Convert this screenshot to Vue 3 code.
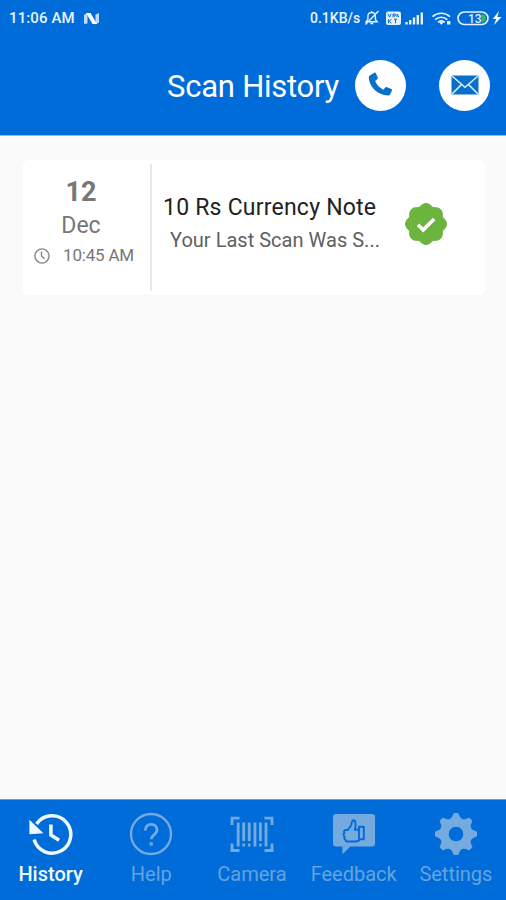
<script setup>
import { ref } from 'vue'

const active = ref('History')
const tabs = ['History', 'Help', 'Camera', 'Feedback', 'Settings']

const point = (r, deg) => {
  const a = (deg * Math.PI) / 180
  return `${(22 + r * Math.sin(a)).toFixed(2)} ${(22 - r * Math.cos(a)).toFixed(2)}`
}

// Eight soft lobes around the check mark
const badgePath = 'M' + Array.from({ length: 120 }, (_, i) => {
  const deg = i * 3
  return point(18 + 2.5 * Math.abs(Math.cos((4 * deg * Math.PI) / 180)) ** 1.35, deg)
}).join('L') + 'Z'

// Eight tapered teeth
const gearPath = 'M' + Array.from({ length: 8 }, (_, i) => {
  const d = i * 45
  return [point(15.6, d - 17), point(17, d - 11), point(20.3, d - 5), point(20.3, d + 5), point(17, d + 11), point(15.6, d + 17)].join('L')
}).join('L') + 'Z'
</script>

<template>
  <div class="screen">
    <header class="top">
      <div class="status">
        <span class="clock">11:06 AM</span>
        <svg class="nlogo" width="17" height="13" viewBox="0 0 17 13">
          <path d="M1 3 4.5 1v10.5L1 12zM12.5 2.5 16 1v9.5l-3.5 2z" fill="#b9dcfb" />
          <path d="M3 1h4.5l6.5 11H9.5z" fill="#fff" />
        </svg>
        <span class="rate">0.1KB/s</span>
        <svg class="sys" width="136" height="20" viewBox="0 0 136 20" fill="none" stroke="#e3f1ff" stroke-width="1.4">
          <path d="M5 13.8h11.2l-1.8-2.4V8.5c0-2.4-1.5-4-3.7-4s-3.8 1.6-3.8 4v2.8zM9.3 15.5h3M10.7 4.5V3M4.5 16.5 17.5 3" />
          <rect x="25" y="3.5" width="15" height="13.5" rx="2" fill="#e3f1ff" stroke="none" />
          <path d="m27 5.8 1.6 3.4 1.6-3.4M32 9.3V6h2.2v2H32M36 6v3M36.2 6l1.5 3M27.5 11.3v4M30.5 11.3l-2.5 2 2.5 2M33 11.3h3M34.5 11.3v4" stroke="#0870d5" stroke-width="1" />
          <path d="M45.5 14v2.5M49.2 12v4.5M53 9.5v7M56.8 7v9.5M60.8 4.5v12" stroke-width="2.4" />
          <path d="M71.5 8.6c5-4.5 12.5-4.5 17.5 0M74.2 11.6c3.6-3.1 8.5-3.1 12.1 0M77 14.3c2-1.8 4.7-1.8 6.7 0" stroke-width="1.7" />
          <path d="m78.2 14.4 2.1 2.3 2.2-2.3q-2.2-1.5-4.3 0zM86 13h3.4v3.6H86z" fill="#e3f1ff" stroke="none" />
          <rect x="97" y="4" width="30" height="12.5" rx="6.2" stroke-width="1.6" />
          <path d="M120.5 6h1.2q3 1 3 4.2t-3 4.2h-1.2z" fill="#35b85d" stroke="none" />
          <text x="107" y="14.6" class="charge">13</text>
          <path d="m138 3-6.2 8.1h3.4L133 17l7.5-8h-4.1z" fill="#fff" stroke="none" />
        </svg>
      </div>
      <div class="bar">
        <h1>Scan History</h1>
        <button class="round" aria-label="Call">
          <svg width="26" height="26" viewBox="0 0 26 26" fill="#0870c9">
            <path d="M2.2 3.2 6.3.8c.7-.4 1.3-.1 1.6.5l1.8 4.2c.3.7.1 1.3-.5 1.8L7.1 9c1.7 4 4.5 6.8 8.3 8.7l1.8-2.1c.5-.6 1.1-.7 1.8-.4l4.3 1.9c.7.3.9.9.6 1.6l-1.9 3.8c-.4.8-1.1 1.1-1.9 1.1C9.3 23 1 14.7.8 5.3c0-.9.5-1.6 1.4-2.1z" />
          </svg>
        </button>
        <button class="round" aria-label="Mail">
          <svg width="28" height="20" viewBox="0 0 28 20">
            <path d="M.5.5h27v19H.5z" fill="#0870c9" />
            <path d="m1 1 13 11.2L27 1M1 19l9.7-9.6M27 19l-9.7-9.6" fill="none" stroke="#d9ecfc" stroke-width="1.5" />
          </svg>
        </button>
      </div>
    </header>

    <main>
      <article class="card">
        <div class="when">
          <strong>12</strong>
          <span class="month">Dec</span>
          <span class="time">
            <svg width="16" height="16" viewBox="0 0 16 16" fill="none" stroke="#858585" stroke-width="1.4">
              <circle cx="8" cy="8" r="7.1" /><path d="M7.5 3.5v4.7l3.2 2.4" />
            </svg>
            <span>10:45 AM</span>
          </span>
        </div>
        <div class="what">
          <h2>10 Rs Currency Note</h2>
          <p>Your Last Scan Was S...</p>
        </div>
        <svg class="badge" width="44" height="44" viewBox="0 0 44 44">
          <path :d="badgePath" fill="#6db43e" stroke="#6db43e" stroke-linejoin="round" />
          <path d="m14 22.7 5.2 5.2L30.2 17" fill="none" stroke="#fff" stroke-width="3.6" />
        </svg>
      </article>
    </main>

    <nav>
      <button v-for="tab in tabs" :key="tab" class="tab" :class="[tab.toLowerCase(), { active: tab === active }]" @click="active = tab">
        <svg class="icon" width="44" height="44" viewBox="0 0 44 44" fill="none" stroke="currentColor">
          <template v-if="tab === 'History'">
            <path d="M5.1 27.6A18.7 18.7 0 1 0 7.6 12" stroke-width="3.5" />
            <path d="M.4 7.8v14.4l14-.9z" fill="currentColor" stroke="none" />
            <path d="M21.9 12.5v10.6l8.2 5.2" stroke-width="3.6" />
          </template>
          <template v-else-if="tab === 'Help'">
            <circle cx="22" cy="22" r="20" stroke-width="2.3" />
            <path d="M16.3 18.4c0-3.8 2.3-6 5.8-6s5.9 2.1 5.9 5.4c0 5.3-5.8 4.7-5.8 9.4" stroke-width="2.8" />
            <path d="M20.6 30.3h3.2v3.2h-3.2z" fill="currentColor" stroke="none" />
          </template>
          <template v-else-if="tab === 'Camera'">
            <path d="M2 13V6.2h7.5M34.5 6.2H42V13M2 31.5v7h7.5M34.5 38.5H42v-7" stroke-width="2.8" />
            <path d="M8.2 10.5v24M36 10.5v24M19.2 10.5V29M25 10.5v24" stroke-width="2.8" />
            <path d="M13.7 10.5V29M30.4 10.5V29" stroke-width="2.8" />
            <path d="M13.7 31.5v3M19.2 31.5v3M30.4 31.5v3" stroke-width="2.5" />
          </template>
          <template v-else-if="tab === 'Feedback'">
            <path d="M4 2h36q3 0 3 3v26.5q0 3-3 3H18.3L10.5 42.2v-7.7H4q-3 0-3-3V5q0-3 3-3z" fill="currentColor" stroke="none" />
            <path class="cut" d="M27 17.8h-4.2c.9-3.2 1.5-9.5-1.3-9.5-2 0-1.6 3.5-2.5 5.3-.9 1.9-2.5 3-3.2 4.4H14c-1.9 0-2.5 1.6-1.5 2.8-1.5 1.2-1.2 3.2.3 3.8-1 1.3-.4 2.9.8 3.3-.2 1.2.9 1.6 2 1.6H24l3-1zM27 14.8h4.8v12.5H27z" stroke-width="1.9" stroke-linejoin="round" />
          </template>
          <template v-else>
            <path :d="gearPath" fill="currentColor" stroke-width="1.6" stroke-linejoin="round" />
            <circle class="hole" cx="22" cy="22" r="7.3" stroke="none" />
          </template>
        </svg>
        <span>{{ tab }}</span>
      </button>
    </nav>
  </div>
</template>

<style>
body { margin: 0; }
</style>

<style scoped>
.screen { width: 506px; height: 900px; display: flex; flex-direction: column; background: #fafafa; font-family: Roboto, sans-serif; overflow: hidden; }
button { border: 0; padding: 0; font: inherit; }
svg { display: block; flex: none; }
h1, h2, p { margin: 0; font-weight: 400; white-space: nowrap; }
.top { height: 136px; box-sizing: border-box; flex: none; background: #006cd9; border-bottom: 1px solid #8dbbe9; color: #fff; }
.status { height: 36px; display: flex; align-items: center; padding: 0 9px 0 9px; box-sizing: border-box; color: #e7f4ff; font-weight: 500; }
.clock { font-size: 15px; width: 67px; letter-spacing: .1px; white-space: nowrap; }
.nlogo { margin-left: 7px; }
.rate { font-size: 14px; margin-left: auto; width: 51px; white-space: nowrap; }
.sys { overflow: visible; }
.charge { font: 500 12px Roboto, sans-serif; fill: #dff0ff; stroke: none; }
.bar { display: flex; align-items: center; justify-content: flex-end; height: 98px; padding-right: 16px; }
h1 { font-size: 31px; line-height: 40px; letter-spacing: -.25px; margin-right: 16px; padding-top: 3px; }
.round { width: 51px; height: 51px; border-radius: 50%; background: #fff; display: flex; align-items: center; justify-content: center; }
.round + .round { margin-left: 33px; }
main { flex: 1; padding: 24px 20px 0 22px; }
.card { height: 135px; display: flex; background: #fff; border-radius: 7px; box-shadow: 0 0 2px rgba(0, 0, 0, .025); }
.when { width: 130px; height: 127px; margin-top: 4px; box-sizing: border-box; border-right: 2px solid #e8e8e8; display: flex; flex-direction: column; align-items: center; color: #777; padding: 12px 10px 0 0; }
.when strong { font-size: 27px; line-height: 32px; font-weight: 700; }
.month { font-size: 23px; line-height: 34px; padding-top: 1px; margin-bottom: -1px; }
.time { display: flex; align-items: center; gap: 13px; font-size: 17px; line-height: 27px; letter-spacing: -.2px; margin-left: 6px; white-space: nowrap; }
.what { width: 219px; margin-left: 11px; padding-top: 32px; }
h2 { font-size: 23px; line-height: 32px; letter-spacing: .22px; color: #222; }
p { font-size: 20px; line-height: 33px; letter-spacing: .02px; color: #606060; margin-left: 7px; }
.badge { margin: 42px 0 0 22px; }
nav { height: 101px; box-sizing: border-box; display: grid; grid-template-columns: repeat(5, 1fr); border-top: 1px solid #5c9fe3; background: #006cd9; }
.tab { min-width: 0; background: none; color: #65a3df; display: flex; flex-direction: column; align-items: center; padding-top: 12px; }
.icon { color: #75aadf; }
.tab span { font-size: 20px; line-height: 26px; margin-top: 5px; }
.tab.active { color: #edf8ff; font-weight: 500; }
.active .icon { color: #edf8ff; }
.help, .feedback { padding-right: 1px; }
.camera { padding-right: 2px; }
.settings { padding-left: 1px; }
.cut { stroke: #006cd9; }
.hole { fill: #006cd9; }
</style>
